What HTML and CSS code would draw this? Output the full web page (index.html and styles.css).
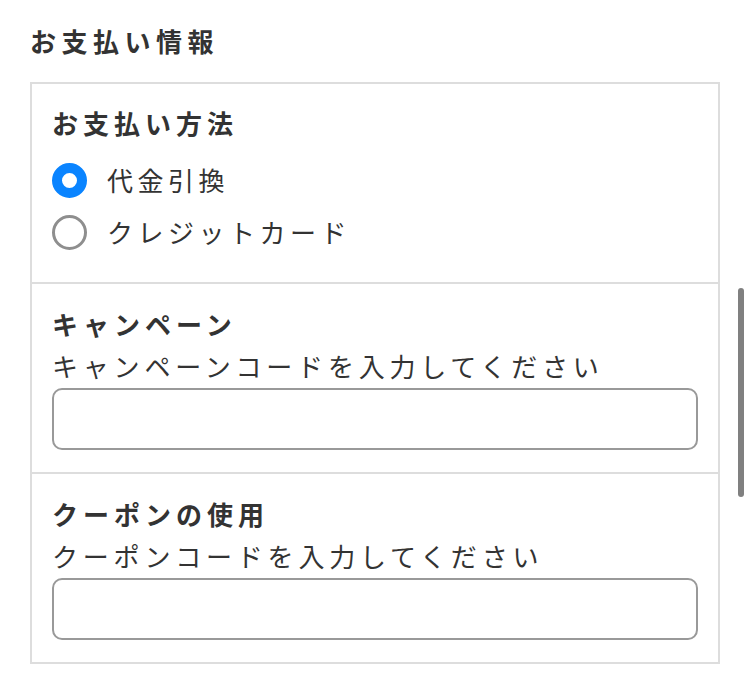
FILE: index.html
```html
<!DOCTYPE html>
<html lang="ja">
<head>
<meta charset="utf-8">
<title>お支払い情報</title>
<link rel="stylesheet" href="styles.css">
</head>
<body>
<main class="page">
  <h1 class="page-title">お支払い情報</h1>
  <div class="card">
    <section class="section section-payment">
      <h2 class="section-title">お支払い方法</h2>
      <ul class="radio-list">
        <li class="radio-row">
          <span class="radio radio-checked"></span>
          <span class="radio-label">代金引換</span>
        </li>
        <li class="radio-row">
          <span class="radio"></span>
          <span class="radio-label">クレジットカード</span>
        </li>
      </ul>
    </section>
    <section class="section">
      <h2 class="section-title">キャンペーン</h2>
      <p class="field-label">キャンペーンコードを入力してください</p>
      <input class="text-input" type="text" aria-label="キャンペーンコード">
    </section>
    <section class="section">
      <h2 class="section-title">クーポンの使用</h2>
      <p class="field-label">クーポンコードを入力してください</p>
      <input class="text-input" type="text" aria-label="クーポンコード">
    </section>
  </div>
  <div class="scroll-indicator"></div>
</main>
</body>
</html>
```

FILE: styles.css
```css
* {
  box-sizing: border-box;
}

html, body {
  margin: 0;
  padding: 0;
  background: #ffffff;
}

body {
  font-family: "Noto Sans CJK JP", "Noto Sans", sans-serif;
  color: #333333;
}

.page {
  padding: 21px 30px 0 30px;
}

.page-title {
  margin: 0 0 21px 0;
  font-size: 26px;
  line-height: 40px;
  font-weight: 700;
  letter-spacing: 5.5px;
  color: #333333;
}

.card {
  border: 2px solid #dddddd;
}

.section {
  padding: 19px 20px 22px 20px;
}

.section-payment {
  padding: 18px 20px 24px 20px;
}

.section + .section {
  border-top: 2px solid #dddddd;
}

.section-title {
  margin: 0;
  font-size: 26px;
  line-height: 42px;
  font-weight: 700;
  letter-spacing: 5px;
}

.radio-list {
  list-style: none;
  margin: 10px 0 0 0;
  padding: 0;
}

.radio-row {
  display: flex;
  align-items: center;
  height: 52px;
}

.radio {
  flex: none;
  width: 35px;
  height: 35px;
  border-radius: 50%;
  border: 3px solid #8e8e8e;
  background: #ffffff;
}

.radio-checked {
  border: 10px solid #0a84ff;
}

.radio-label {
  margin-left: 20px;
  font-size: 26px;
  line-height: 42px;
  letter-spacing: 4.5px;
}

.field-label {
  margin: 0 0 1px 0;
  font-size: 26px;
  line-height: 42px;
  letter-spacing: 4.8px;
}

.text-input {
  display: block;
  width: 100%;
  height: 62px;
  margin: 0;
  padding: 0 14px;
  border: 2px solid #999999;
  border-radius: 10px;
  background: #ffffff;
  font-family: inherit;
  font-size: 26px;
  outline: none;
}

.scroll-indicator {
  position: absolute;
  left: 738px;
  top: 288px;
  width: 6px;
  height: 209px;
  border-radius: 3px;
  background: #808080;
}
```
